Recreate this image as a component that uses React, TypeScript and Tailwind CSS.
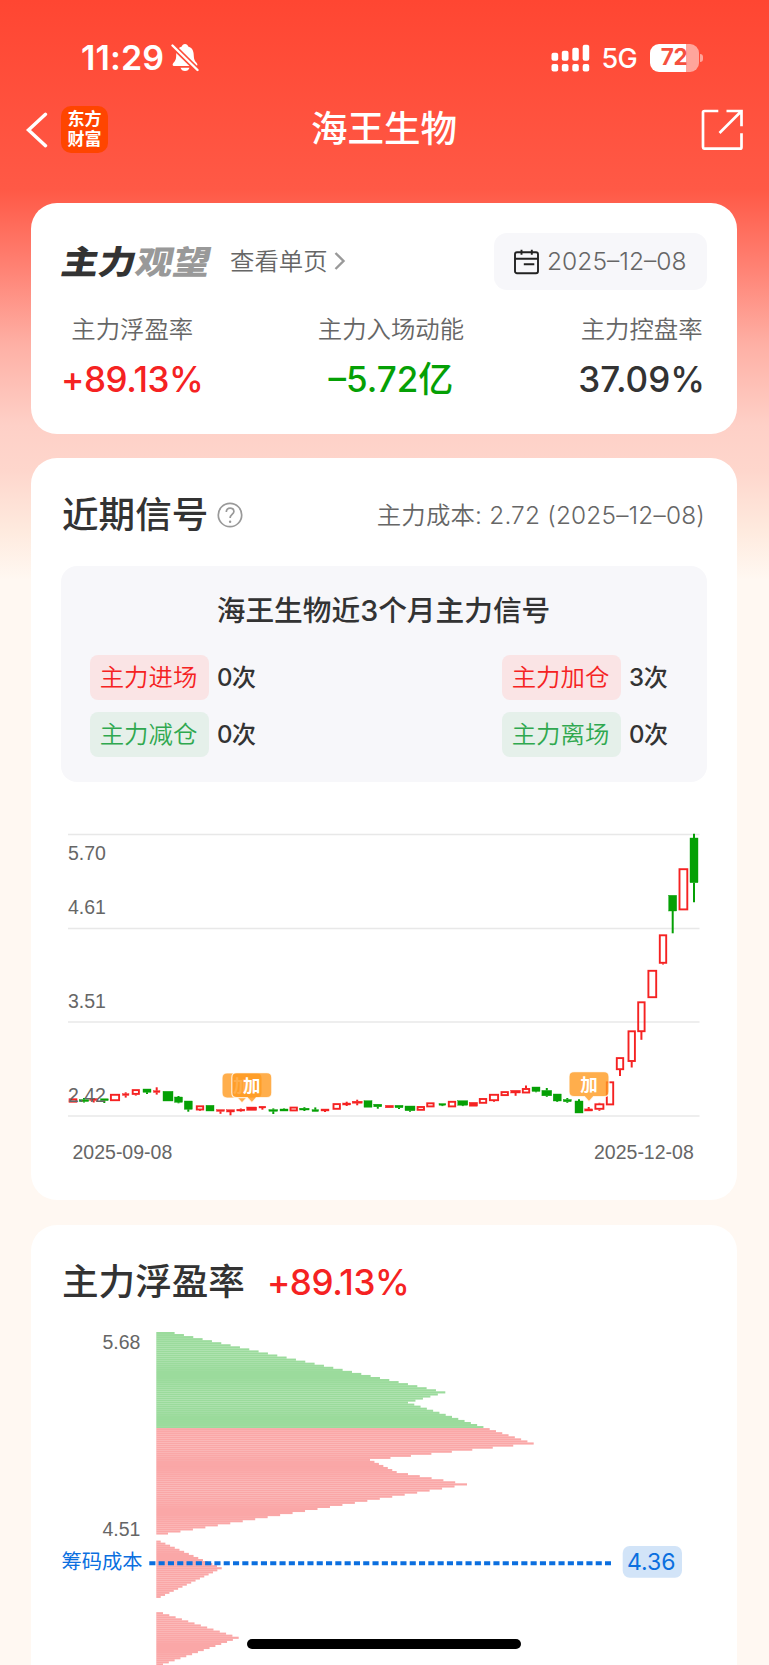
import type { ReactNode } from 'react';

type Candle = {
  x: number;
  w: number;
  top: number;
  bottom: number;
  high?: number;
  low?: number;
  kind: 'up' | 'flat' | 'down';
};

const RED = '#f52222';
const GREEN = '#05a005';

// x, width, body top, body bottom, kind, high, low
const raw: [number, number, number, number, string, number?, number?][] = [
  [73, 8.3, 1098.5, 1102.5, 'u'],
  [84, 9.5, 1099.6, 1101.5, 'd', 1098, 1102.5],
  [93.7, 8, 1098.5, 1100.5, 'f', 1098.5, 1102.5],
  [104.3, 8, 1098.8, 1100.6, 'd', 1098.8, 1103],
  [115, 9.8, 1094, 1101, 'u'],
  [125.7, 6.5, 1093.7, 1095.4, 'f', 1092.3, 1097.6],
  [135.8, 7.8, 1089.3, 1094.7, 'u', 1089.3, 1095.6],
  [147, 8, 1089, 1092.3, 'd', 1089, 1094],
  [156.7, 6.5, 1090.7, 1092.4, 'f', 1087.3, 1094.6],
  [168, 10, 1091.3, 1101, 'd'],
  [178.5, 8, 1097, 1102.3, 'd', 1096, 1103.3],
  [188.3, 8, 1101, 1109.3, 'd', 1101, 1111.7],
  [200, 8, 1105.5, 1110.3, 'u', 1105.5, 1111],
  [210, 8, 1105.3, 1111, 'd'],
  [220.5, 8, 1109.6, 1111.4, 'f', 1109.6, 1113.8],
  [230.5, 8, 1109.7, 1112, 'f', 1109.7, 1115.3],
  [240.8, 8, 1109.2, 1111, 'f', 1108.5, 1111.6],
  [251.7, 10, 1107, 1110.4, 'f'],
  [262.4, 6.8, 1106.2, 1108, 'f', 1106, 1109.7],
  [273.3, 8.8, 1109.6, 1111.3, 'd', 1108.4, 1114],
  [284, 8, 1109, 1111, 'd', 1108.4, 1111],
  [293.7, 8, 1106.8, 1111.2, 'u'],
  [304.4, 9.4, 1108.2, 1110, 'd', 1107.2, 1111],
  [315.3, 6.5, 1109.7, 1111.5, 'd', 1107.4, 1111.5],
  [325, 8, 1109, 1111, 'f', 1109, 1112],
  [336.7, 8, 1103.3, 1109.6, 'u'],
  [346.7, 8, 1103, 1105, 'f', 1101.7, 1106],
  [357.2, 10, 1101.2, 1103.2, 'f', 1099.7, 1105.3],
  [368, 8, 1100.7, 1107.2, 'd'],
  [377.8, 8, 1104.2, 1106.8, 'd', 1104, 1108.7],
  [389.4, 8, 1105.3, 1107.8, 'f'],
  [399, 8, 1105.3, 1107.7, 'd', 1105.3, 1109],
  [410, 10, 1106, 1110.7, 'd', 1106, 1111.7],
  [420.8, 8, 1106.2, 1110.6, 'u'],
  [430.4, 8, 1102.5, 1107.2, 'u'],
  [442.4, 6.8, 1103.6, 1105.2, 'd', 1103.6, 1106.1],
  [452, 8, 1101, 1107.2, 'u'],
  [462.8, 10, 1100.7, 1105.2, 'd', 1100.7, 1106.1],
  [473.4, 8.4, 1102.3, 1106.2, 'f'],
  [483, 8, 1098.2, 1103.6, 'u'],
  [494, 9.8, 1094, 1101, 'u', 1094, 1101.8],
  [504.7, 8, 1091.3, 1095.9, 'u'],
  [515.6, 9.6, 1090.3, 1093, 'f', 1090.3, 1095.8],
  [526, 8, 1088.2, 1093.3, 'u', 1085.4, 1093.3],
  [536, 8, 1087, 1091.4, 'd', 1087, 1092.3],
  [546.8, 9.8, 1090.4, 1095.8, 'd', 1088, 1096.8],
  [557.2, 8, 1094, 1101, 'd', 1094, 1101.8],
  [567.3, 8, 1099.5, 1101.7, 'd', 1098, 1102.8],
  [579, 8, 1101, 1113, 'd', 1099.3, 1113],
  [588.7, 8, 1108.9, 1111, 'f', 1107, 1111],
  [599.4, 9.6, 1103.5, 1109.6, 'u', 1102.8, 1110.8],
  [610, 8, 1081.5, 1105.2, 'u'],
  [620, 8, 1057.3, 1070, 'u', 1057.3, 1076],
  [631.7, 8, 1030.5, 1061.8, 'u', 1030.5, 1067.5],
  [641.4, 8, 1001.5, 1032, 'u', 1001.5, 1039.8],
  [652.3, 9.4, 970, 998, 'u'],
  [663, 8, 934.5, 963.6, 'u', 934.5, 964.6],
  [672.7, 8, 895.3, 911, 'd', 895.3, 933.3],
  [683.4, 9.4, 868.4, 910.2, 'u'],
  [694, 8, 838, 882.7, 'd', 833.7, 902.3],
];

const candles: Candle[] = raw.map(([x, w, top, bottom, k, high, low]) => ({
  x,
  w,
  top,
  bottom,
  high,
  low,
  kind: k === 'u' ? 'up' : k === 'f' ? 'flat' : 'down',
}));

// Chip distribution: [row, right edge] knots, one polyline per peak
const ROW = 2.045;
const CHIP_LEFT = 156.3;
const CHIP_TOP = 1332;
const chipKnots: [number, number][][] = [
  [[0, 174.6], [29, 445.3], [34, 408], [54, 533.7], [62, 370], [68, 396.7], [69, 408], [74, 467], [98, 168]],
  [[102, 160.7], [115, 221.7], [129, 160.7]],
  [[137, 163], [149, 238.7], [162, 163]],
];

const chipRows = chipKnots.flatMap((knots) => {
  const rows: { row: number; right: number }[] = [];
  for (let i = 0; i < knots.length - 1; i++) {
    const [r0, x0] = knots[i];
    const [r1, x1] = knots[i + 1];
    for (let r = i === 0 ? r0 : r0 + 1; r <= r1; r++) {
      rows.push({ row: r, right: x0 + ((x1 - x0) * (r - r0)) / (r1 - r0) });
    }
  }
  return rows;
});

function Card({ children, className = '' }: { children: ReactNode; className?: string }) {
  return <section className={`bg-white rounded-[26px] ml-[31px] mr-[32px] px-[30px] ${className}`}>{children}</section>;
}

function StatusBar() {
  return (
    <div className="flex items-center justify-between pt-[36px] pl-[81px] pr-[66px] h-[79px] text-white">
      <div className="flex items-center gap-[7px]">
        <span className="text-[34px] leading-none font-semibold tracking-[0.1px]">11:29</span>
        <svg width="28" height="29" viewBox="0 0 28 29" fill="currentColor">
          <path d="M14 1c-1.700 0-2.800 1-3.200 2.500C6 5 5.300 9 5.200 13c-.1 3.500-1 5-2.700 6.800C1 21.500 1.500 23 3 23h22c1.500 0 2-1.500.5-3.200-1.700-1.800-2.600-3.300-2.700-6.800C22.700 9 22 5 17.200 3.500 16.800 2 15.700 1 14 1z" />
          <path d="M9.500 24.700h9c-.6 2-2.300 3.300-4.500 3.300s-3.900-1.300-4.500-3.300z" />
          <path d="M1.200 2.200 27.500 28" stroke="#ff4d39" strokeWidth="5.500" />
          <path d="M1.500 2.500 26.500 27" stroke="currentColor" strokeWidth="2.400" strokeLinecap="round" />
        </svg>
      </div>
      <div className="flex items-center">
        <svg width="39" height="28" viewBox="0 0 39 28" fill="currentColor">
          <rect x="0.500" y="8.700" width="6.700" height="8" rx="2" />
          <rect x="10.800" y="6.700" width="6.700" height="10" rx="2" />
          <rect x="21.300" y="3.700" width="6.500" height="13" rx="2" />
          <rect x="31.700" y="0.700" width="6.500" height="16" rx="2" />
          <rect x="0.500" y="20" width="6.700" height="7.500" rx="2" />
          <rect x="10.800" y="20" width="6.700" height="7.500" rx="2" />
          <rect x="21.300" y="20" width="6.500" height="7.500" rx="2" />
          <rect x="31.700" y="20" width="6.500" height="7.500" rx="2" />
        </svg>
        <span className="relative top-px ml-[12px] w-[36px] text-[27px] leading-none font-medium tracking-[-0.8px]">5G</span>
        <div className="ml-[12px] flex items-center gap-[1.500px]">
          <div className="w-[49px] h-[28px] rounded-[9px] flex items-center justify-center bg-linear-to-r from-white from-[73%] to-[#ffa59b] to-[73%]">
            <span className="text-[22.500px] leading-none font-bold text-[#f5503e] tracking-[-0.3px]">72</span>
          </div>
          <div className="w-[3px] h-[8px] rounded-r-full bg-[#ffa59b]" />
        </div>
      </div>
    </div>
  );
}

function NavBar() {
  return (
    <header className="grid grid-cols-3 items-center h-[101px] pl-[25px] pr-[26px] text-white">
      <div className="flex items-center gap-[13px]">
        <svg width="23" height="36" viewBox="0 0 23 36" fill="none" stroke="currentColor" strokeWidth="3.400">
          <path d="M20.500 2.300 3.500 18l17 15.700" strokeLinecap="round" />
        </svg>
        <div className="w-[47px] h-[47px] rounded-[10px] bg-[#ff4500] flex flex-col items-center justify-center text-[17px] leading-[19.500px] font-bold">
          <span>东方</span>
          <span>财富</span>
        </div>
      </div>
      <h1 className="text-[36.500px] leading-none font-medium text-center whitespace-nowrap">海王生物</h1>
      <svg className="justify-self-end" width="42" height="42" viewBox="0 0 42 42" fill="none" stroke="currentColor" strokeWidth="2.700">
        <path d="M17.300 2H3.500Q2 2 2 3.500v34Q2 39.700 3.500 39.700h35.500q1.500 0 1.500-1.500V24.300" />
        <path d="M25.500 2h15v15.300M40 2.500 18.500 24" />
      </svg>
    </header>
  );
}

function Stat({ label, value, color }: { label: string; value: string; color: string }) {
  return (
    <div className="flex flex-col items-center">
      <span className="text-[24.400px] leading-[34px] font-[350] text-[#666]">{label}</span>
      <span className={`mt-[11px] text-[35px] leading-[44px] whitespace-nowrap ${color}`}>{value}</span>
    </div>
  );
}

function SummaryCard() {
  return (
    <Card className="h-[231px] pt-[30px]">
      <div className="flex items-center justify-between">
        <div className="flex items-center">
          <div className="relative left-px top-px w-[149px] text-[37.200px] leading-none font-black -skew-x-10 scale-y-88 whitespace-nowrap">
            <span className="text-[#333]">主力</span>
            <span className="text-[#999]">观望</span>
          </div>
          <span className="ml-[20px] text-[24.400px] leading-[34px] font-[350] text-[#666]">查看单页</span>
          <svg className="ml-[6px]" width="12" height="20" viewBox="0 0 12 20" fill="none" stroke="#999" strokeWidth="2.400">
            <path d="m1.500 2 8 8-8 8" />
          </svg>
        </div>
        <div className="flex items-center w-[213px] h-[57px] pl-[20px] rounded-[13px] bg-[#f7f7fa]">
          <svg width="25" height="26" viewBox="0 0 25 26" fill="none" stroke="#222" strokeWidth="1.900">
            <rect x="1" y="3.200" width="23" height="21" rx="2" />
            <path d="M1 9.800h23M7.500 0.800v5M17.800 0.800v5M9.800 15.200h10.500" />
          </svg>
          <span className="ml-[8px] text-[24.600px] leading-none font-[350] text-[#666]">2025–12–08</span>
        </div>
      </div>
      <div className="flex justify-between mt-[22px] pr-[2px]">
        <Stat label="主力浮盈率" value="+89.13%" color="text-[#f52222] font-[450] tracking-[-0.4px]" />
        <Stat label="主力入场动能" value="–5.72亿" color="text-[#05a005] font-medium" />
        <Stat label="主力控盘率" value="37.09%" color="text-[#333] font-medium" />
      </div>
    </Card>
  );
}

function Signal({ name, count, sell }: { name: string; count: number; sell?: boolean }) {
  return (
    <div className="flex items-center">
      <span
        className={`flex items-center justify-center w-[119px] h-[45px] pr-[2px] rounded-[8px] text-[24.400px] font-[350] ${
          sell ? 'bg-[#e5f0ea] text-[#2fa84f]' : 'bg-[#fae4e5] text-[#f52222]'
        }`}
      >
        {name}
      </span>
      <span className="ml-[8px] w-[39px] text-[24px] font-[450] tracking-[-0.4px] text-[#333] whitespace-nowrap">{count}次</span>
    </div>
  );
}

function Marker({ x, y }: { x: number; y: number }) {
  return (
    <g transform={`translate(${x} ${y})`}>
      <path
        d="M-15 0h30q5 0 5 5v15q0 5-5 5H4.500L0 30l-4.500-5H-15q-5 0-5-5V5q0-5 5-5z"
        fill="#ff9a1f"
        fillOpacity="0.8"
        stroke="#fff"
        strokeOpacity="0.8"
        strokeWidth="1.200"
      />
      <text x="0" y="19" textAnchor="middle" fontSize="17.500" fontWeight="700" fill="#fff">
        加
      </text>
    </g>
  );
}

function KLine() {
  return (
    <svg className="block" width="646" height="360" viewBox="61 820 646 360">
      {[834.5, 928.5, 1022, 1116].map((y) => (
        <line key={y} x1="68" x2="699.500" y1={y} y2={y} stroke="#e8e8e8" strokeWidth="1.400" />
      ))}
      {candles.map((c) => {
        const color = c.kind === 'down' ? GREEN : RED;
        return (
          <g key={c.x} stroke={color} fill={color}>
            {c.high !== undefined && c.high < c.top && (
              <line x1={c.x} x2={c.x} y1={c.high} y2={c.top} strokeWidth="2" />
            )}
            {c.low !== undefined && c.low > c.bottom && (
              <line x1={c.x} x2={c.x} y1={c.bottom} y2={c.low} strokeWidth="2" />
            )}
            {c.kind === 'up' ? (
              <rect
                x={c.x - c.w / 2 + 0.8}
                y={c.top + 0.8}
                width={c.w - 1.6}
                height={c.bottom - c.top - 1.6}
                fill="none"
                strokeWidth="1.900"
              />
            ) : (
              <rect x={c.x - c.w / 2} y={c.top} width={c.w} height={c.bottom - c.top} strokeWidth="0.400" />
            )}
          </g>
        );
      })}
      <Marker x={242} y={1073} />
      <Marker x={251.8} y={1072.7} />
      <Marker x={589} y={1071.7} />
      <g className="font-['Liberation_Sans',sans-serif]" fontSize="19.500" fill="#666">
        <text x="68" y="859.500">5.70</text>
        <text x="68" y="914">4.61</text>
        <text x="68" y="1008">3.51</text>
        <text x="68" y="1102">2.42</text>
        <text x="72.500" y="1159">2025-09-08</text>
        <text x="594" y="1159">2025-12-08</text>
      </g>
    </svg>
  );
}

function SignalCard() {
  return (
    <Card className="h-[742px] mt-[24px] pt-[33px]">
      <div className="flex items-center justify-between h-[48px] pl-px pr-[2px]">
        <div className="flex items-center">
          <h2 className="text-[36.600px] leading-none font-medium text-[#333]">近期信号</h2>
          <svg className="ml-[9px]" width="26" height="26" viewBox="0 0 26 26" fill="none" stroke="#999" strokeWidth="1.700">
            <circle cx="13" cy="13" r="11.700" />
            <path d="M9.300 10c0-2.500 1.600-3.900 3.800-3.900s3.800 1.400 3.800 3.400c0 3-3.800 3-3.800 6.500" />
            <circle cx="13.100" cy="19.700" r="1.200" fill="#999" stroke="none" />
          </svg>
        </div>
        <span className="text-[24.400px] leading-none font-[350] tracking-[0.2px] text-[#666]">主力成本: 2.72 (2025–12–08)</span>
      </div>
      <div className="mt-[27px] h-[216px] rounded-[16px] bg-[#f7f7fa] pt-[25px] pl-[29px] pr-[39px]">
        <h3 className="text-[28.700px] leading-[40px] font-medium text-[#333] text-center pl-[9px]">海王生物近3个月主力信号</h3>
        <div className="flex justify-between mt-[24px]">
          <div className="flex flex-col gap-[12px]">
            <Signal name="主力进场" count={0} />
            <Signal name="主力减仓" count={0} sell />
          </div>
          <div className="flex flex-col gap-[12px]">
            <Signal name="主力加仓" count={3} />
            <Signal name="主力离场" count={0} sell />
          </div>
        </div>
      </div>
      <div className="mt-[38px]">
        <KLine />
      </div>
    </Card>
  );
}

function ProfitCard() {
  return (
    <Card className="h-[500px] mt-[25px] pt-[34px]">
      <div className="flex items-center h-[46px] pl-px">
        <h2 className="text-[36.600px] leading-none font-medium text-[#333]">主力浮盈率</h2>
        <span className="ml-[22px] text-[35px] leading-none font-[450] tracking-[-0.4px] text-[#f52222]">+89.13%</span>
      </div>
      <svg className="block mt-[15px]" width="646" height="345" viewBox="61 1320 646 345">
        {chipRows.map(({ row, right }) => (
          <rect
            key={row}
            x={CHIP_LEFT}
            y={CHIP_TOP + row * ROW}
            width={right - CHIP_LEFT}
            height={ROW + 0.1}
            fill={row < 47 ? '#9bdb9c' : '#faa7a7'}
          />
        ))}
        <g className="font-['Liberation_Sans',sans-serif]" fontSize="19.500" fill="#666">
          <text x="102.500" y="1348.700">5.68</text>
          <text x="102.500" y="1536">4.51</text>
        </g>
        <text x="61.500" y="1569" fontSize="20.300" fill="#0b6fdf">筹码成本</text>
        <line x1="149.300" x2="611" y1="1563.200" y2="1563.200" stroke="#0b6fdf" strokeWidth="4" strokeDasharray="6.100 3.200" />
        <rect x="622.700" y="1546" width="59.300" height="31.700" rx="7" fill="#d2e4f8" />
        <text x="651.300" y="1570" textAnchor="middle" fontSize="23" fill="#0b6fdf">4.36</text>
      </svg>
    </Card>
  );
}

export default function App() {
  return (
    <main className="relative w-[769px] h-[1665px] overflow-hidden font-[Inter,'Noto_Sans_CJK_SC',sans-serif] bg-[linear-gradient(180deg,#ff4632_0px,#ff5946_190px,#ff8375_270px,#feb0a5_345px,#fed0c7_425px,#fed6cc_470px,#feeade_530px,#fff8f2_580px)]">
      <StatusBar />
      <NavBar />
      <div className="pt-[23px]">
        <SummaryCard />
        <SignalCard />
        <ProfitCard />
      </div>
      {/* Home indicator */}
      <div className="absolute left-[247px] top-[1639px] w-[274px] h-[10px] rounded-full bg-black" />
    </main>
  );
}
